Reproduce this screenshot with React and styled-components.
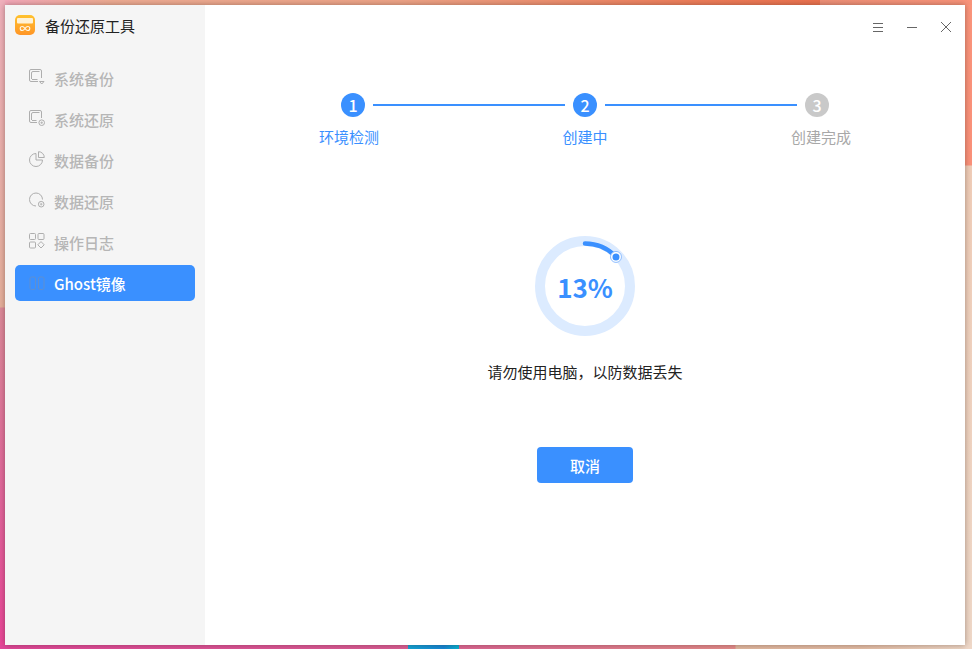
import React from "react";
import styled, { createGlobalStyle } from "styled-components";

const GlobalStyle = createGlobalStyle`
  html, body {
    margin: 0;
    padding: 0;
    width: 972px;
    height: 649px;
    overflow: hidden;
  }
  body {
    font-family: "Noto Sans CJK SC", "Noto Sans", sans-serif;
    font-size: 15px;
  }
`;

const Desktop = styled.div`
  position: relative;
  width: 972px;
  height: 649px;
  box-sizing: border-box;
  padding: 5px 7px 4px 5px;
  overflow: hidden;
  background:
    linear-gradient(90deg, transparent 0, transparent 820px, #ee9078 820px, #f9937a 972px) top / 100% 5px no-repeat,
    linear-gradient(180deg, #fb957c 0, #fb917a 165px, #f0cdb8 166px, #efd8c8 100%) right / 7px 100% no-repeat,
    linear-gradient(90deg, #e2479a 0, #dc5c96 380px, #e58c8c 735px, #e2b8a0 736px, #e4bda6 860px, #efd8c8 972px) bottom / 100% 4px no-repeat,
    linear-gradient(180deg, #f0b0bc 0, #e6b09c 307px, #dd8a9a 308px, #e2659c 500px, #ea4699 100%) left / 5px 100% no-repeat,
    linear-gradient(90deg, #f4a8bc 0, #eeac94 110px, #eea488 400px, #ee7d5a 700px, #ec7350 820px) top / 100% 5px no-repeat;
`;

const TaskbarTile = styled.div`
  position: absolute;
  left: 408px;
  bottom: 0;
  width: 51px;
  height: 4px;
  background: linear-gradient(90deg, #12a6d8 0, #1587d8 70%, #06b4d2 100%);
`;

const Window = styled.div`
  position: relative;
  display: flex;
  width: 960px;
  height: 640px;
  background: #fff;
  box-shadow: 0 0 6px rgba(40, 20, 10, 0.38);
`;

const Sidebar = styled.aside`
  width: 200px;
  flex-shrink: 0;
  box-sizing: border-box;
  padding: 10px 10px 0;
  background: #f5f5f5;
`;

const Brand = styled.div`
  display: flex;
  align-items: center;
  gap: 10px;
  height: 20px;
  margin-bottom: 25px;
  color: #222;
  font-size: 15px;
  line-height: 24px;
`;

const BrandName = styled.span`
  padding-top: 2px;
`;

const Nav = styled.nav`
  display: flex;
  flex-direction: column;
  gap: 5px;
`;

const NavItem = styled.div`
  display: flex;
  align-items: center;
  gap: 9px;
  height: 36px;
  padding-left: 14px;
  border-radius: 5px;
  font-size: 15px;
  font-weight: 500;
  color: ${(props) => (props.active ? "#fff" : "#b6b6b6")};
  background: ${(props) => (props.active ? "#3a90ff" : "transparent")};

  svg {
    margin-top: -2px;
    flex-shrink: 0;
  }
`;

const Main = styled.main`
  flex: 1;
  display: flex;
  flex-direction: column;
  align-items: center;
  padding-top: 88px;
`;

const WindowControls = styled.div`
  position: absolute;
  top: 17px;
  right: 14px;
  display: flex;
  gap: 24px;
  color: #666;

  svg {
    display: block;
  }
`;

const StepTrack = styled.div`
  display: flex;
  align-items: center;
  gap: 8px;
`;

const StepDot = styled.div`
  width: 24px;
  height: 24px;
  border-radius: 50%;
  display: flex;
  align-items: center;
  justify-content: center;
  color: #fff;
  font-size: 16px;
  font-weight: 500;
  line-height: 24px;
  background: ${(props) => (props.done ? "#3a90ff" : "#c9c9c9")};
`;

const StepLine = styled.div`
  width: 192px;
  height: 2px;
  background: #3a90ff;
`;

const StepLabels = styled.div`
  display: flex;
  justify-content: space-between;
  width: 532px;
  margin-top: 9px;
`;

const StepLabel = styled.span`
  font-size: 15px;
  line-height: 22px;
  color: ${(props) => (props.done ? "#3a90ff" : "#a8a8a8")};
`;

const Progress = styled.div`
  position: relative;
  width: 100px;
  height: 100px;
  margin-top: 88px;

  svg {
    display: block;
  }
`;

const Percent = styled.div`
  position: absolute;
  inset: 0;
  display: flex;
  align-items: center;
  justify-content: center;
  font-size: 26px;
  font-weight: 600;
  color: #3a90ff;
`;

const Hint = styled.p`
  margin: 25px 0 0;
  font-size: 15px;
  line-height: 22px;
  color: #222;
`;

const CancelButton = styled.button`
  width: 96px;
  height: 36px;
  margin-top: 64px;
  padding: 0;
  border: 0;
  border-radius: 4px;
  background: #3a90ff;
  color: #fff;
  font-family: inherit;
  font-size: 15px;
  font-weight: 500;
`;

const AppIcon = () => (
  <svg width="20" height="20" viewBox="0 0 20 20">
    <defs>
      <linearGradient id="appBody" x1="0" y1="0" x2="0" y2="1">
        <stop offset="0" stopColor="#ffc22e" />
        <stop offset="1" stopColor="#ff9526" />
      </linearGradient>
    </defs>
    <rect width="20" height="20" rx="5" fill="url(#appBody)" />
    <rect x="2" y="3" width="16" height="5.5" rx="1" fill="#fff2d6" />
    <path
      d="M10 13.5c-1-1.5-1.8-2-2.8-2a2 2 0 0 0 0 4c1 0 1.8-.5 2.8-2zm0 0c1-1.5 1.8-2 2.8-2a2 2 0 0 1 0 4c-1 0-1.8-.5-2.8-2z"
      fill="none"
      stroke="#fff7e6"
      strokeWidth="1.1"
    />
  </svg>
);

const PlusBadge = ({ x, y }) => (
  <>
    <circle cx={x} cy={y} r="2.8" />
    <path d={`M${x - 1.3} ${y}h2.6M${x} ${y - 1.3}v2.6`} strokeWidth="0.8" />
  </>
);

const iconProps = {
  width: 16,
  height: 16,
  viewBox: "0 0 16 16",
  fill: "none",
  stroke: "#aeaeae",
  strokeWidth: 1,
};

const SystemBackupIcon = () => (
  <svg {...iconProps}>
    <path d="M12.5 9V2A1.5 1.5 0 0 0 11 .5H2A1.5 1.5 0 0 0 .5 2v9A1.5 1.5 0 0 0 2 12.5h7" />
    <path d="M2.5 10V4A1.5 1.5 0 0 1 4 2.5h6.5M3 10.5h5.5" />
    <path d="M10.5 12.5h4.5l-2.25 2.5z" />
  </svg>
);

const SystemRestoreIcon = () => (
  <svg {...iconProps}>
    <path d="M12.5 8V2A1.5 1.5 0 0 0 11 .5H2A1.5 1.5 0 0 0 .5 2v9A1.5 1.5 0 0 0 2 12.5h6" />
    <path d="M2.5 10V4A1.5 1.5 0 0 1 4 2.5h6.5M3 10.5h4.5" />
    <PlusBadge x={12.7} y={12.7} />
  </svg>
);

const DataBackupIcon = () => (
  <svg {...iconProps}>
    <path d="M7 2.5a6.5 6.5 0 1 0 6.5 6.5H7z" />
    <path d="M9.5 .7a5.8 5.8 0 0 1 5.8 5.8H9.5z" />
  </svg>
);

const DataRestoreIcon = () => (
  <svg {...iconProps}>
    <path d="M13.5 7.5A6.5 6.5 0 1 0 7 14" />
    <PlusBadge x={12.2} y={12.2} />
  </svg>
);

const LogIcon = () => (
  <svg {...iconProps}>
    <rect x="0.5" y="0.5" width="6" height="6" rx="1" />
    <rect x="9" y="0.5" width="6" height="6" rx="1" />
    <rect x="0.5" y="9" width="6" height="6" rx="1" />
    <path d="M12 8.6l3.2 3.2-3.2 3.2-3.2-3.2z" />
  </svg>
);

const GhostIcon = () => (
  <svg {...iconProps} stroke="#5f8fd0">
    <rect x="1" y="3" width="5.5" height="12.5" rx="1.5" />
    <rect x="9.5" y="3" width="5.5" height="12.5" rx="1.5" />
  </svg>
);

const navItems = [
  { label: "系统备份", Icon: SystemBackupIcon },
  { label: "系统还原", Icon: SystemRestoreIcon },
  { label: "数据备份", Icon: DataBackupIcon },
  { label: "数据还原", Icon: DataRestoreIcon },
  { label: "操作日志", Icon: LogIcon },
  { label: "Ghost镜像", Icon: GhostIcon, active: true },
];

const App = () => {
  const percent = 13;
  const radius = 42.5;
  const angle = (percent / 100) * 2 * Math.PI;
  const endX = 50 + radius * Math.sin(angle);
  const endY = 50 - radius * Math.cos(angle);

  return (
    <>
      <GlobalStyle />
      <Desktop>
        <TaskbarTile />
        <Window>
          <Sidebar>
            <Brand>
              <AppIcon />
              <BrandName>备份还原工具</BrandName>
            </Brand>
            <Nav>
              {navItems.map(({ label, Icon, active }) => (
                <NavItem key={label} active={active}>
                  <Icon />
                  {label}
                </NavItem>
              ))}
            </Nav>
          </Sidebar>
          <Main>
            <WindowControls>
              <svg width="10" height="10" viewBox="0 0 10 10" stroke="currentColor">
                <path d="M0 1.5h10M0 5.5h10M0 9.5h10" />
              </svg>
              <svg width="10" height="10" viewBox="0 0 10 10" stroke="currentColor">
                <path d="M0 5.5h10" />
              </svg>
              <svg width="10" height="10" viewBox="0 0 10 10" stroke="currentColor">
                <path d="M0 0l10 10M10 0L0 10" />
              </svg>
            </WindowControls>
            <StepTrack>
              <StepDot done>1</StepDot>
              <StepLine />
              <StepDot done>2</StepDot>
              <StepLine />
              <StepDot>3</StepDot>
            </StepTrack>
            <StepLabels>
              <StepLabel done>环境检测</StepLabel>
              <StepLabel done>创建中</StepLabel>
              <StepLabel>创建完成</StepLabel>
            </StepLabels>
            <Progress>
              <svg width="100" height="100" viewBox="0 0 100 100" fill="none">
                <circle cx="50" cy="50" r="45" stroke="#dcebff" strokeWidth="10" />
                <path
                  d={`M50 ${50 - radius}A${radius} ${radius} 0 0 1 ${endX} ${endY}`}
                  stroke="#3a90ff"
                  strokeWidth="4.5"
                  strokeLinecap="round"
                />
                <circle cx={endX} cy={endY} r="5.5" fill="#fff" stroke="#8dbdff" />
                <circle cx={endX} cy={endY} r="3.5" fill="#3a90ff" />
              </svg>
              <Percent>{percent}%</Percent>
            </Progress>
            <Hint>{"请勿使用电脑\uFF0C以防数据丢失"}</Hint>
            <CancelButton>取消</CancelButton>
          </Main>
        </Window>
      </Desktop>
    </>
  );
};

export default App;
